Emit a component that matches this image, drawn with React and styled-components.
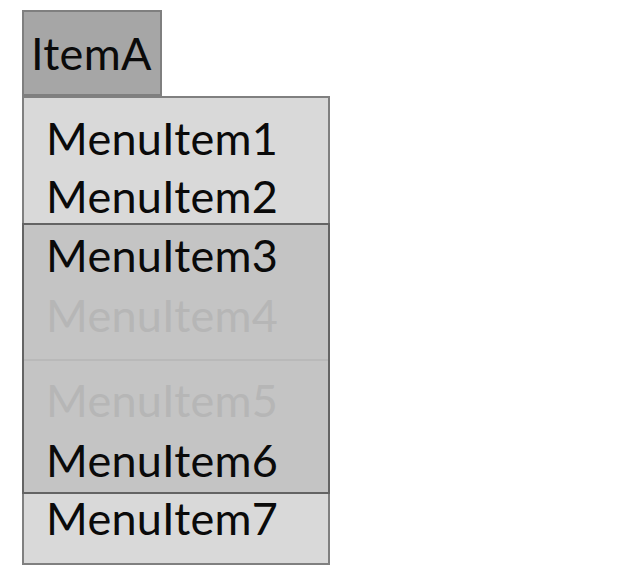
import styled, { createGlobalStyle } from 'styled-components';

const GlobalStyle = createGlobalStyle`
    html, body {
        margin: 0;
        padding: 0;
        background: #ffffff;
    }
    body {
        font-family: Lato, "Open Sans", sans-serif;
        color: #0a0a0a;
    }
`

const Page = styled.div`
    width: 640px;
    height: 576px;
    padding: 10px 0 0 22px;
    box-sizing: border-box;
    display: flex;
    flex-direction: column;
    align-items: flex-start;
`

const TopItem = styled.div`
    width: 140px;
    height: 86px;
    box-sizing: border-box;
    border: 2px solid #7f7f7f;
    background-color: #a6a6a6;
    padding-left: 7px;
    font-size: 45px;
    letter-spacing: 0.3px;
    line-height: 82px;
`

const Menu = styled.div`
    width: 308px;
    display: flex;
    flex-direction: column;
`

const Section = styled.div`
    box-sizing: border-box;
    background-color: #d9d9d9;
    border: 2px solid #808080;
    border-top-width: ${props => props.top ? 2 : 0}px;
    border-bottom-width: ${props => props.bottom ? 2 : 0}px;
    height: ${props => props.height}px;
    padding-top: ${props => props.pad || 0}px;
`

const Group = styled.div`
    box-sizing: border-box;
    background-color: #c4c4c4;
    border: 2px solid #646464;
    display: flex;
    flex-direction: column;
`

const SubGroup = styled.div`
    height: ${props => props.height}px;
    padding-top: ${props => props.pad || 0}px;
    box-sizing: border-box;
`

const Separator = styled.div`
    height: 2px;
    background-color: #b9b9b9;
`

const Item = styled.div`
    padding-left: 22px;
    font-size: 45px;
    letter-spacing: 0.3px;
    height: ${props => props.h}px;
    line-height: ${props => props.h}px;
    color: ${props => props.disabled ? '#b6b6b6' : '#0a0a0a'};
    white-space: nowrap;
`

function App() {
    return (
        <Page>
            <GlobalStyle />
            <TopItem>ItemA</TopItem>
            <Menu>
                <Section top height={127} pad={11}>
                    <Item h={58}>MenuItem1</Item>
                    <Item h={58}>MenuItem2</Item>
                </Section>
                <Group>
                    <SubGroup height={134}>
                        <Item h={60}>MenuItem3</Item>
                        <Item h={60} disabled>MenuItem4</Item>
                    </SubGroup>
                    <Separator />
                    <SubGroup height={131} pad={9}>
                        <Item h={60} disabled>MenuItem5</Item>
                        <Item h={60}>MenuItem6</Item>
                    </SubGroup>
                </Group>
                <Section bottom height={71}>
                    <Item h={48}>MenuItem7</Item>
                </Section>
            </Menu>
        </Page>
    )
}

export default App;
